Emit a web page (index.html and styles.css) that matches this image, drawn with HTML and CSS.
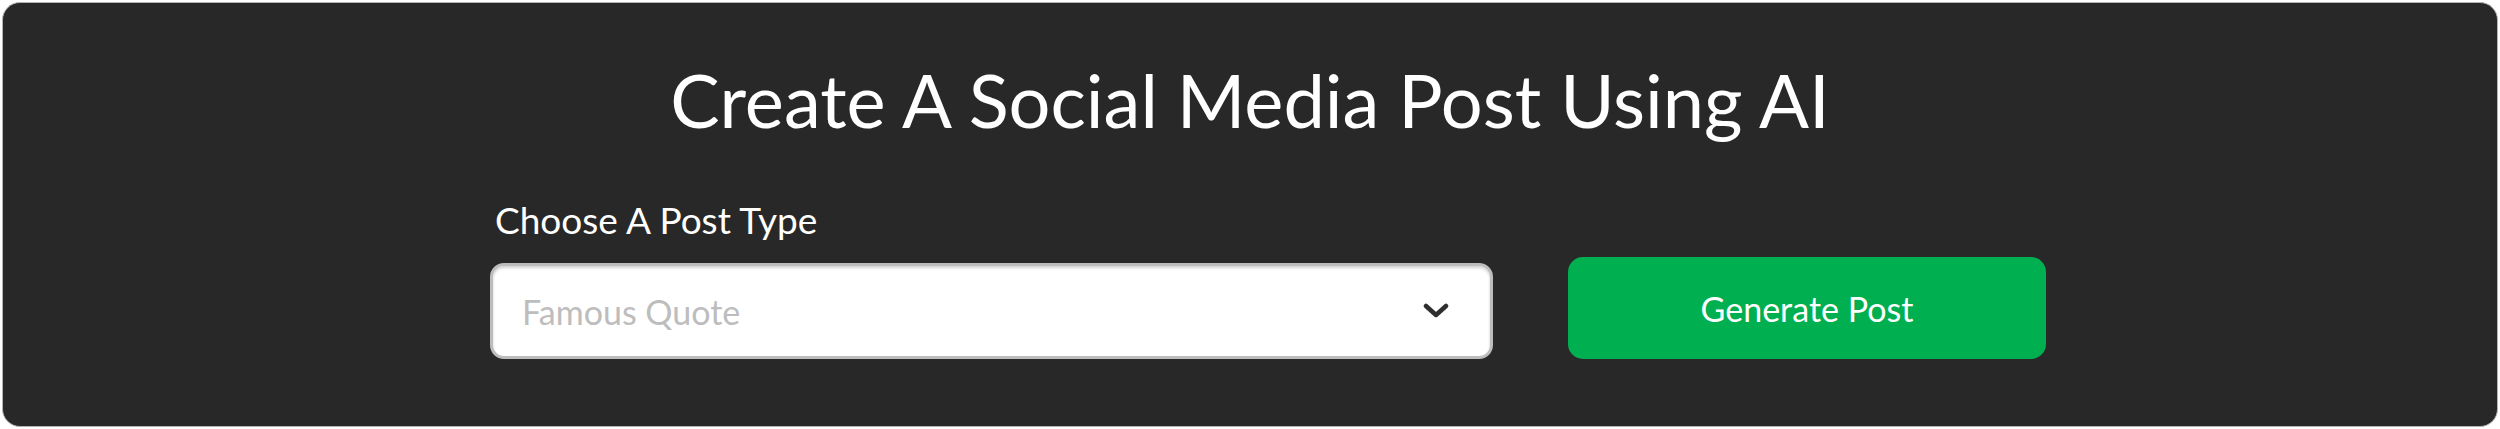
FILE: index.html
```html
<!DOCTYPE html>
<html lang="en">
<head>
<meta charset="utf-8">
<title>Create A Social Media Post Using AI</title>
<link rel="stylesheet" href="styles.css">
</head>
<body>
  <main class="card">
    <h1 class="title">Create A Social Media Post Using AI</h1>
    <form class="form-row">
      <div class="field">
        <label class="field-label" for="post-type">Choose A Post Type</label>
        <div class="select" id="post-type">
          <span class="select-placeholder">Famous Quote</span>
          <svg class="chevron" width="28" height="16" viewBox="0 0 28 16" aria-hidden="true">
            <path d="M4 3 L14 12 L24 3" fill="none" stroke="#2e2e2e" stroke-width="4.5" stroke-linecap="round" stroke-linejoin="round"/>
          </svg>
        </div>
      </div>
      <button type="button" class="generate-btn">Generate Post</button>
    </form>
  </main>
</body>
</html>
```
FILE: styles.css
```css
html, body {
  margin: 0;
  padding: 0;
  background: #ffffff;
}

body {
  padding: 2px;
  font-family: Lato, "Open Sans", "Liberation Sans", sans-serif;
}

.card {
  box-sizing: border-box;
  height: 425px;
  background: #282828;
  border: 1px solid #b4b4b4;
  border-radius: 18px;
  padding-top: 52px;
  display: flex;
  flex-direction: column;
}

.title {
  margin: 0;
  text-align: center;
  color: #ffffff;
  font-weight: 400;
  font-size: 74px;
  line-height: 89px;
}

.form-row {
  margin: 54px 0 0 0;
  padding-left: 487px;
  display: flex;
  align-items: flex-end;
  gap: 75px;
}

.field {
  display: flex;
  flex-direction: column;
  gap: 21px;
}

.field-label {
  color: #ffffff;
  font-size: 37px;
  line-height: 44px;
  padding-left: 5px;
}

.select {
  box-sizing: border-box;
  width: 1003px;
  height: 96px;
  background: #ffffff;
  border: 3px solid #bdbdbd;
  border-radius: 14px;
  box-shadow: inset 0 2px 3px rgba(0, 0, 0, 0.18);
  display: flex;
  align-items: center;
  justify-content: space-between;
  padding: 0 40px 0 29px;
}

.select-placeholder {
  color: #bdbdbd;
  font-size: 34px;
}

.chevron {
  display: block;
}

.generate-btn {
  box-sizing: border-box;
  width: 478px;
  height: 102px;
  border: none;
  border-radius: 15px;
  background: #00b050;
  color: #ffffff;
  font-family: Lato, "Open Sans", "Liberation Sans", sans-serif;
  font-size: 34px;
  cursor: pointer;
}
```
